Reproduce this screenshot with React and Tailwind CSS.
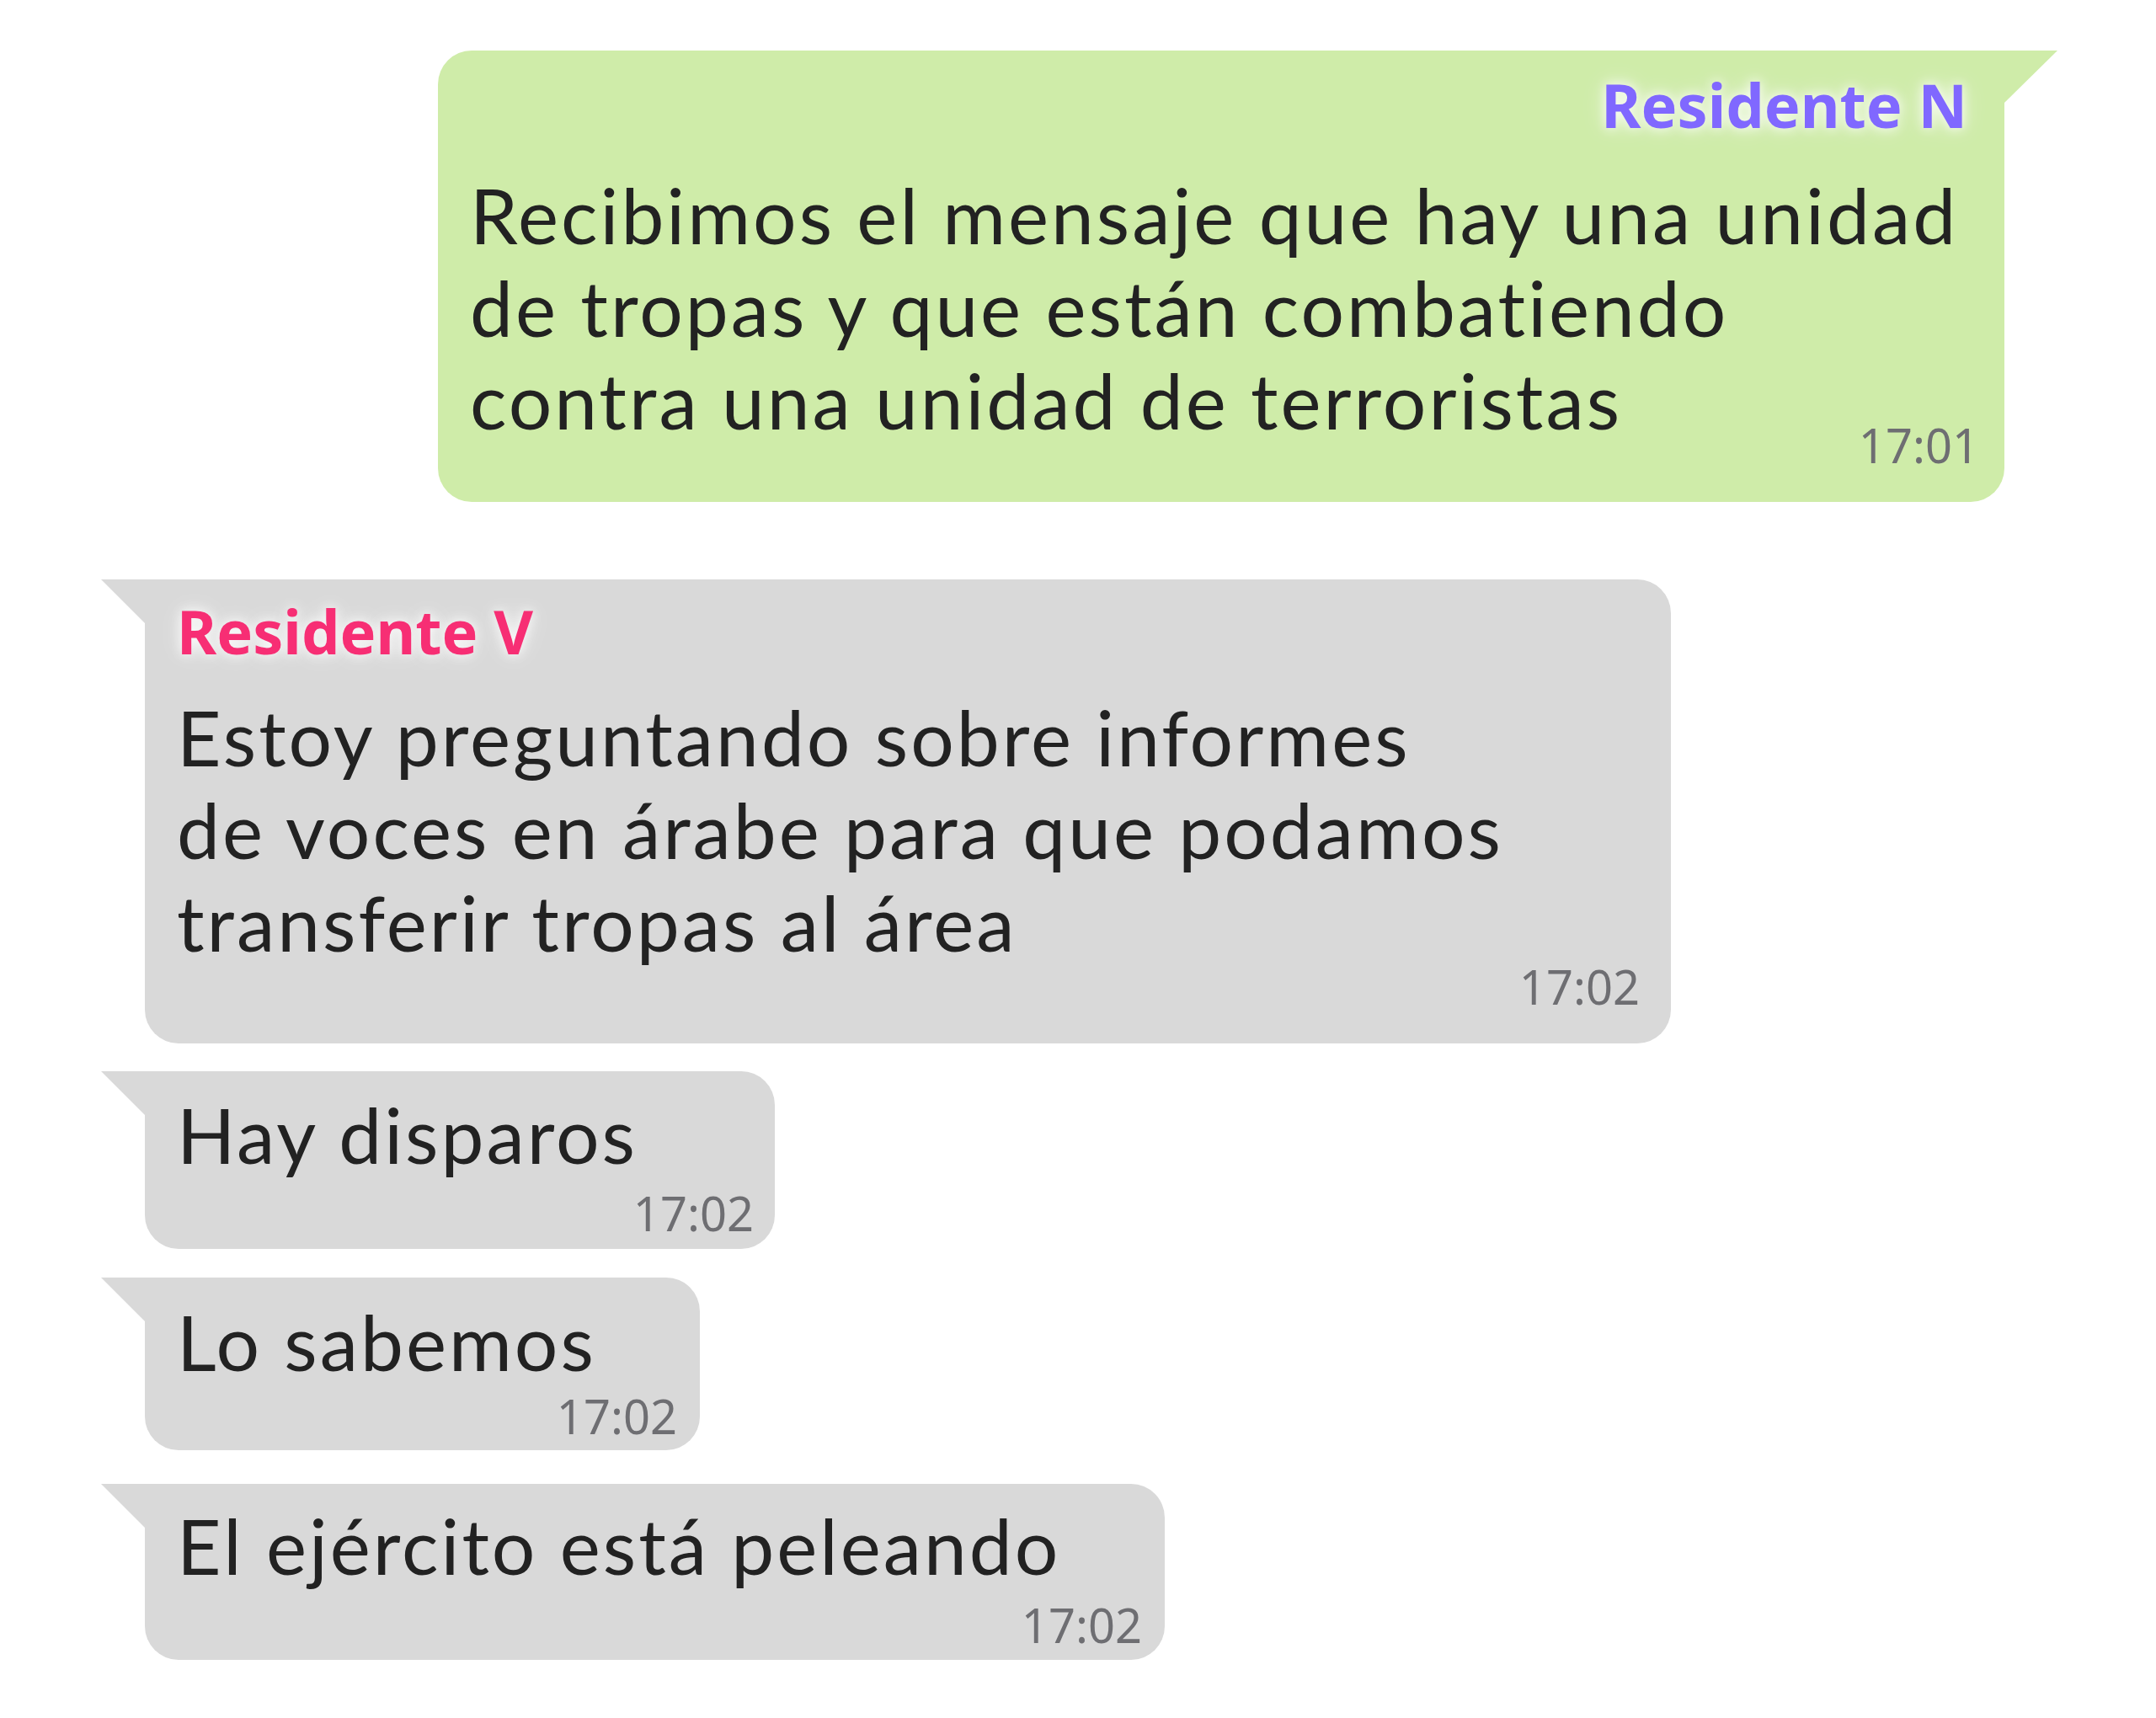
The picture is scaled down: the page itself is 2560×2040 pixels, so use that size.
import React from "react";

const font = { fontFamily: '"Noto Sans", "Open Sans", sans-serif' };
const bodyFont = { fontFamily: 'Lato, "Noto Sans", sans-serif' };

const GrayTail = () => (
  <svg width="52" height="52" viewBox="0 0 52 52" className="shrink-0 block">
    <polygon points="0,0 52,0 52,52" fill="#d9d9d9" />
  </svg>
);

const GreenTail = () => (
  <svg width="63" height="62" viewBox="0 0 63 62" className="shrink-0 block">
    <polygon points="0,0 63,0 0,62" fill="#cfeca9" />
  </svg>
);

const Time = ({ value, className = "" }) => (
  <div
    className={`text-right text-[56px] leading-[56px] text-[#6e6e72] ${className}`}
  >
    {value}
  </div>
);

const Name = ({ children, color }) => (
  <div
    className={`text-[72px] leading-[72px] font-bold ${color} [text-shadow:0_0_14px_rgba(255,255,255,0.95),0_0_28px_rgba(255,255,255,0.6)]`}
  >
    {children}
  </div>
);

const Line = ({ children, className = "" }) => (
  <div
    className={`text-[91px] leading-[110px] tracking-[3px] text-[#222222] whitespace-nowrap ${className}`}
    style={bodyFont}
  >
    {children}
  </div>
);

// last line of a long message with its time tucked at the right
const LastRow = ({ text, time, timeTop }) => (
  <div className="flex justify-between items-start">
    <Line>{text}</Line>
    <Time value={time} className={timeTop} />
  </div>
);

const GrayBubble = ({ width, pt, mt, pb, pr, text, time }) => (
  <div className="flex items-start">
    <GrayTail />
    <div
      className={`flex flex-col bg-[#d9d9d9] rounded-tr-[40px] rounded-b-[40px] pl-[38px] ${width} ${pt} ${pb} ${pr}`}
    >
      <Line>{text}</Line>
      <Time value={time} className={mt} />
    </div>
  </div>
);

export default function App() {
  return (
    <div className="min-h-[2040px] w-[2560px] bg-white pt-[60px]" style={font}>
      <div className="flex items-start pl-[520px]">
        <div className="flex flex-col w-[1860px] bg-[#cfeca9] rounded-tl-[40px] rounded-b-[40px] pt-[28px] pb-[40px] pl-[38px] pr-[30px]">
          <div className="flex justify-end pr-[14px]">
            <Name color="text-[#8068ff]">Residente N</Name>
          </div>
          <Line className="mt-[40px]">Recibimos el mensaje que hay una unidad</Line>
          <Line>de tropas y que están combatiendo</Line>
          <LastRow
            text="contra una unidad de terroristas"
            time="17:01"
            timeTop="mt-[80px]"
          />
        </div>
        <GreenTail />
      </div>

      <div className="flex flex-col pl-[120px] mt-[92px]">
        <div className="flex items-start">
          <GrayTail />
          <div className="flex flex-col w-[1812px] bg-[#d9d9d9] rounded-tr-[40px] rounded-b-[40px] pt-[25px] pb-[40px] pl-[38px] pr-[37px]">
            <Name color="text-[#f72e74]">Residente V</Name>
            <Line className="mt-[35px]">Estoy preguntando sobre informes</Line>
            <Line>de voces en árabe para que podamos</Line>
            <LastRow
              text="transferir tropas al área"
              time="17:02"
              timeTop="mt-[103px]"
            />
          </div>
        </div>

        <div className="mt-[33px]">
          <GrayBubble
            width="w-[748px]"
            pt="pt-[20px]"
            mt="mt-[10px]"
            pb="pb-[15px]"
            pr="pr-[25px]"
            text="Hay disparos"
            time="17:02"
          />
        </div>
        <div className="mt-[34px]">
          <GrayBubble
            width="w-[659px]"
            pt="pt-[21px]"
            mt="mt-[5px]"
            pb="pb-[13px]"
            pr="pr-[27px]"
            text="Lo sabemos"
            time="17:02"
          />
        </div>
        <div className="mt-[40px]">
          <GrayBubble
            width="w-[1211px]"
            pt="pt-[18px]"
            mt="mt-[11px]"
            pb="pb-[14px]"
            pr="pr-[27px]"
            text="El ejército está peleando"
            time="17:02"
          />
        </div>
      </div>
    </div>
  );
}
